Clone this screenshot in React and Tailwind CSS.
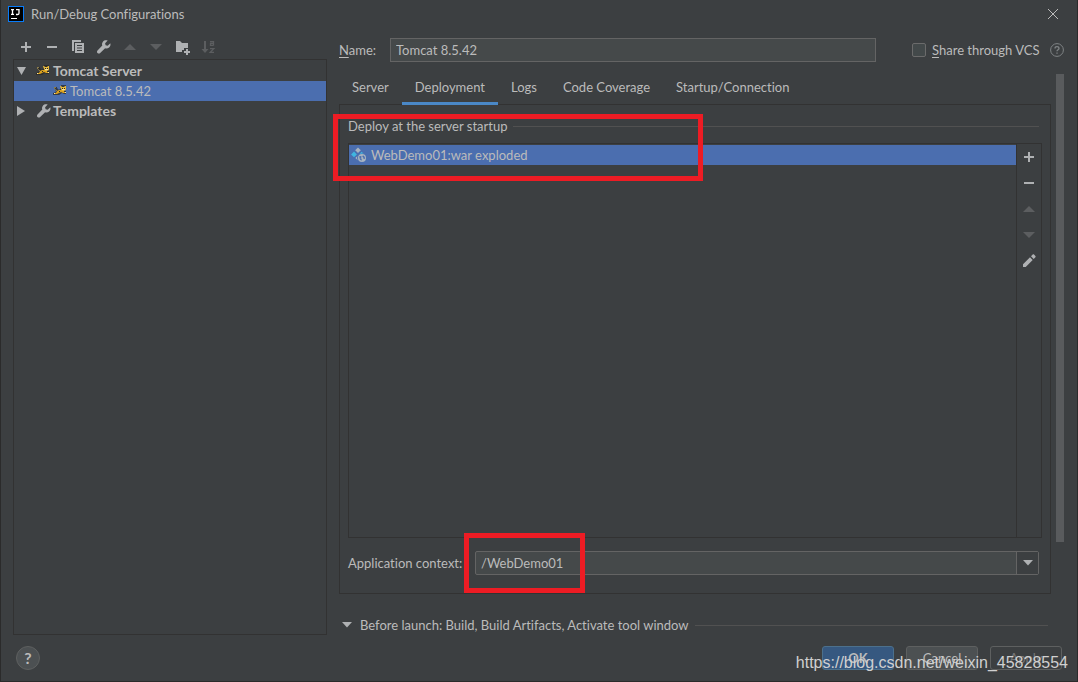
import React, { useState } from "react";

const tabs = ["Server", "Deployment", "Logs", "Code Coverage", "Startup/Connection"];

function Icon({ children, className = "" }) {
  return (
    <svg width="16" height="16" viewBox="0 0 16 16" fill="currentColor" aria-hidden="true" className={`shrink-0 ${className}`}>
      {children}
    </svg>
  );
}

const PlusIcon = () => (
  <Icon>
    <path d="M7 3h2v4h4v2H9v4H7V9H3V7h4z" />
  </Icon>
);

const MinusIcon = () => (
  <Icon>
    <path d="M3 7h10v2H3z" />
  </Icon>
);

const UpIcon = () => (
  <Icon>
    <path d="M2 11l6-6 6 6z" />
  </Icon>
);

const DownIcon = () => (
  <Icon>
    <path d="M2 5h12l-6 6z" />
  </Icon>
);

const CopyIcon = () => (
  <Icon>
    <path d="M2 1h9v2H4v9H2z" />
    <path fillRule="evenodd" d="M5 4h9v10H5zM7 6v1h5V6zm0 2.500v1h5v-1zM7 11v1h5v-1z" />
  </Icon>
);

const WrenchIcon = () => (
  <Icon>
    <path d="M14.3 4.2l-2.6 2.5-2.1-.5-.5-2 2.6-2.6C10 .9 8 1.300 6.900 2.700c-.9 1.100-1.100 2.600-.6 3.900L1.500 11.400c-.7.8-.7 1.900 0 2.600.8.8 1.900.8 2.700 0l4.900-4.800c1.300.5 2.900.2 4-.8 1.300-1.100 1.700-2.700 1.200-4.200z" />
  </Icon>
);

const FolderIcon = () => (
  <Icon>
    <path d="M2 2h4l2 2h6v5h-4v2H8v2H2z" />
    <path d="M12 10h2v2h2v2h-2v2h-2v-2h-2v-2h2z" />
  </Icon>
);

const SortIcon = () => (
  <Icon>
    <path d="M4 2h2v8h2.500L5 14l-3.500-4H4z" />
    <path fill="none" stroke="currentColor" strokeWidth="1.300" d="M10 2.600h3.500v3.800M13.500 4.300h-3v2.100h3M10 9.600h3.800L10.200 13.400H14" />
  </Icon>
);

const PencilIcon = () => (
  <Icon>
    <path d="M2 11.300L9 4.300 11.700 7 4.700 14H2zM10 3.300l1.700-1.700c.4-.4.900-.4 1.300 0L14.400 3c.4.4.4.9 0 1.300L12.700 6z" />
  </Icon>
);

const TomcatIcon = () => (
  <Icon>
    <path fill="#2a2a26" fillOpacity=".75" d="M1 4h3v1l2 2 2-2V2h5v4l-1 2h1v3h-2L9 10l-3 2H0v-2l3-1-1-3z" />
    <path fill="#8a7a4a" d="M1 4h2v1H2v1H1zM2 6h1v1h1v1H3z" />
    <path fill="#d9a01e" d="M4 8l2-1h3l2 1v1h2v1h-3L8 9 6 10 4 11H1v-1h2z" />
    <path fill="#e8b93c" d="M7 3h1l1 1h2l1-1h1v4l-2 1H9L8 6z" />
    <path fill="#f6e3a1" d="M9 6h3v1H9zM1 10h1v1H1zM12 9h1v1h-1z" />
    <path fill="#2a2a26" d="M9 5h1v1H9zM11 5h1v1h-1zM6 8h1v1H6z" />
  </Icon>
);

const ArtifactIcon = () => (
  <Icon>
    <path fill="#a9b4c0" d="M7 .5l2.800 2.800L7 6.100 4.200 3.300z" />
    <path fill="#40b6e0" d="M3 4.500l2.900 2.900L3 10.300.1 7.400zM10.500 4.700l2.400 2c-1.800-.3-3.300 0-4.500.9z" />
    <path fill="#a9b4c0" d="M6.500 9c-.6 1.300-.5 2.800.3 4.200L4.300 11z" />
    <circle cx="11" cy="11" r="4" fill="#a9b4c0" />
    <path fill="#4b6eaf" d="M8.200 9.200l2-.2.400 1.200-1.200 1 1.400.6-.3 2-1.600-1.300zM12 8.300l1.700 1.500.3 1.900-1.400.3-.3-1.400-1-.8z" />
  </Icon>
);

const toolbar = [
  { label: "Add", icon: <PlusIcon /> },
  { label: "Remove", icon: <MinusIcon /> },
  { label: "Copy", icon: <CopyIcon /> },
  { label: "Edit templates", icon: <WrenchIcon /> },
  { label: "Move up", icon: <UpIcon />, disabled: true },
  { label: "Move down", icon: <DownIcon />, disabled: true },
  { label: "New folder", icon: <FolderIcon /> },
  { label: "Sort", icon: <SortIcon />, disabled: true },
];

const artifactActions = [
  { label: "Add artifact", icon: <PlusIcon /> },
  { label: "Remove artifact", icon: <MinusIcon /> },
  { label: "Move artifact up", icon: <UpIcon />, disabled: true },
  { label: "Move artifact down", icon: <DownIcon />, disabled: true },
  { label: "Edit artifact", icon: <PencilIcon /> },
];

function IconButton({ label, disabled, className, children }) {
  return (
    <button
      aria-label={label}
      disabled={disabled}
      className={`flex items-center justify-center text-[#afb1b3] disabled:text-[#5c5e60] ${className}`}
    >
      {children}
    </button>
  );
}

function TitleBar() {
  return (
    <header className="flex h-7 items-center gap-[7px] pl-[7px] pr-[18px]">
      <svg width="16" height="16" viewBox="0 0 16 16" aria-hidden="true">
        <rect width="16" height="16" fill="#087cfa" />
        <rect x="1" y="1" width="14" height="14" fill="#000" />
        <path stroke="#fff" strokeWidth="1.300" fill="none" d="M3 3.600h3M4.500 3.600v4.800M3 8.400h3M8 3.600h3v3.600c0 1-.8 1.300-1.500 1.300H8" />
        <rect x="3" y="12" width="6" height="1" fill="#fff" />
      </svg>
      <h1 className="flex-1">Run/Debug Configurations</h1>
      <button aria-label="Close">
        <svg width="12" height="12" viewBox="0 0 12 12" stroke="#bbbbbb" aria-hidden="true">
          <path d="M1 1l10 10M11 1L1 11" />
        </svg>
      </button>
    </header>
  );
}

function Sidebar() {
  return (
    <aside className="flex w-[314px] shrink-0 flex-col pt-[7px]">
      <div className="flex h-6">
        {toolbar.map((item) => (
          <IconButton key={item.label} label={item.label} disabled={item.disabled} className="w-[26px]">
            {item.icon}
          </IconButton>
        ))}
      </div>
      <ul role="tree" aria-label="Configurations" className="flex-1 border border-[#323232] pt-px">
        <li role="treeitem" aria-expanded="true">
          <div className="flex h-5 items-center gap-px text-sm leading-5 font-bold">
            <svg width="10" height="10" viewBox="0 0 10 10" fill="#afb1b3" className="ml-[3px] mr-2" aria-hidden="true">
              <path d="M0 1h9L4.500 9z" />
            </svg>
            <TomcatIcon />
            Tomcat Server
          </div>
          <ul role="group">
            <li role="treeitem" aria-selected="true" className="flex h-5 items-center gap-px bg-[#4b6eaf] pl-[39px]">
              <TomcatIcon />
              Tomcat 8.5.42
            </li>
          </ul>
        </li>
        <li role="treeitem" aria-expanded="false" className="flex h-5 items-center gap-px text-sm leading-5 font-bold">
          <svg width="10" height="10" viewBox="0 0 10 10" fill="#afb1b3" className="ml-[3px] mr-2" aria-hidden="true">
            <path d="M0 0l8 5-8 5z" />
          </svg>
          <span className="text-[#afb1b3]">
            <WrenchIcon />
          </span>
          Templates
        </li>
      </ul>
    </aside>
  );
}

function DeploymentPanel({ context, setContext }) {
  return (
    <div role="tabpanel" aria-label="Deployment" className="-mt-px flex flex-1 flex-col border border-[#323232] px-2 pb-[18px] pt-[11px]">
      <section className="relative flex flex-1 flex-col">
        <div className="flex h-5 items-center gap-1.5 pr-[3px]">
          <h2>Deploy at the server startup</h2>
          <div className="h-px flex-1 bg-[#515151]" />
        </div>
        <div className="mt-[7px] flex flex-1 border border-[#323232]">
          <ul role="listbox" aria-label="Artifacts" className="flex-1 pt-px">
            <li role="option" aria-selected="true" className="flex h-5 items-center gap-1 bg-[#4b6eaf] pl-0.5">
              <ArtifactIcon />
              WebDemo01:war exploded
            </li>
          </ul>
          <div className="flex w-[25px] flex-col border-l border-[#323232]">
            {artifactActions.map((item) => (
              <IconButton key={item.label} label={item.label} disabled={item.disabled} className="h-[26px]">
                {item.icon}
              </IconButton>
            ))}
          </div>
        </div>
        {/* highlight around the deployed artifact */}
        <div className="pointer-events-none absolute -left-[15px] -top-0.5 h-[67px] w-[370px] border-5 border-[#ed1c24]" />
      </section>
      <div className="mt-[13px] flex h-6 items-center pr-[3px]">
        <label htmlFor="context" className="w-[127px]">
          Application context:
        </label>
        <div className="relative flex h-full flex-1 rounded-xs border border-[#646464] bg-[#45494a]">
          <input
            id="context"
            value={context}
            onChange={(e) => setContext(e.target.value)}
            className="min-w-0 flex-1 px-[5px] outline-none"
          />
          <button aria-label="Show contexts" className="flex w-[22px] items-center justify-center border-l border-[#646464] bg-[#3c3f41]">
            <svg width="10" height="6" viewBox="0 0 10 6" fill="#afb1b3" aria-hidden="true">
              <path d="M0 0h10L5 5.500z" />
            </svg>
          </button>
          {/* highlight around the context path */}
          <div className="pointer-events-none absolute -left-3 -top-[19px] h-[60px] w-[121px] border-5 border-[#ed1c24]" />
        </div>
      </div>
    </div>
  );
}

function Footer() {
  const button = "h-6 w-[72px] rounded-[3px] border";
  return (
    <footer className="relative flex items-center gap-3 py-[11px] pl-[15px] pr-[15px]">
      <button aria-label="Help" className="mr-auto size-6 rounded-full border border-[#5e6060] bg-[#4c5052] text-base leading-none font-bold">
        ?
      </button>
      <button className={`${button} border-[#4c708c] bg-[#365880] font-bold`}>OK</button>
      <button className={`${button} border-[#5e6060] bg-[#4c5052]`}>Cancel</button>
      <button disabled className={`${button} border-[#5e6060] text-[#777777]`}>
        Apply
      </button>
      <p className="pointer-events-none absolute bottom-2 right-[9px] font-['Liberation_Sans',sans-serif] text-base leading-5 text-[#d0d0d0]">
        https://blog.csdn.net/weixin_45828554
      </p>
    </footer>
  );
}

export default function App() {
  const [name, setName] = useState("Tomcat 8.5.42");
  const [shared, setShared] = useState(false);
  const [activeTab, setActiveTab] = useState("Deployment");
  const [context, setContext] = useState("/WebDemo01");

  return (
    <div className="flex min-h-screen flex-col border-x border-b border-[#2b2b2b] bg-[#3c3f41] font-['Lato',sans-serif] text-[13px] leading-5 text-[#bbbbbb] [font-variant-ligatures:none]">
      <TitleBar />
      <div className="flex flex-1 gap-3 pl-3 pr-[13px]">
        <Sidebar />
        <main className="flex min-w-0 flex-1 flex-col pt-[10px]">
          <div className="flex h-6 items-center">
            <label htmlFor="name" className="w-[51px]">
              <span className="underline underline-offset-2">N</span>ame:
            </label>
            <input
              id="name"
              value={name}
              onChange={(e) => setName(e.target.value)}
              className="h-6 min-w-0 flex-1 border border-[#646464] bg-[#45494a] px-[5px] outline-none"
            />
            <input
              id="share"
              type="checkbox"
              checked={shared}
              onChange={(e) => setShared(e.target.checked)}
              className="ml-9 size-3.5 appearance-none rounded-xs border border-[#6b6b6b] bg-[#43494a] checked:bg-[#4b6eaf]"
            />
            <label htmlFor="share" className="ml-1.5 w-[118px]">
              <span className="underline underline-offset-2">S</span>hare through VCS
            </label>
            <button aria-label="About sharing">
              <svg width="14" height="14" viewBox="0 0 14 14" fill="none" stroke="#7f8385" aria-hidden="true">
                <circle cx="7" cy="7" r="6.400" />
                <path strokeWidth="1.300" d="M5 5.500c0-2.400 4-2.400 4 0 0 1.300-2 1.400-2 2.800M7 9.500v1.300" />
              </svg>
            </button>
          </div>
          <div className="mt-2.5 flex flex-1 gap-[5px]">
            <div className="flex min-w-0 flex-1 flex-col">
              <div role="tablist" className="relative flex h-[33px]">
                {tabs.map((tab) => (
                  <button
                    key={tab}
                    role="tab"
                    aria-selected={tab === activeTab}
                    onClick={() => setActiveTab(tab)}
                    className={`border-b-3 px-[13px] ${tab === activeTab ? "border-[#4a88c7]" : "border-transparent"}`}
                  >
                    {tab}
                  </button>
                ))}
              </div>
              <DeploymentPanel context={context} setContext={setContext} />
              <div className="mt-[21px] flex h-5 items-center pl-[3px] pr-[3px]">
                <svg width="10" height="6" viewBox="0 0 10 6" fill="#afb1b3" className="mr-2" aria-hidden="true">
                  <path d="M0 0h10L5 5.500z" />
                </svg>
                <h2>Before launch: Build, Build Artifacts, Activate tool window</h2>
                <div className="ml-1.5 h-px flex-1 bg-[#515151]" />
              </div>
            </div>
            <div className="w-2 pt-0.5">
              <div className="h-5/6 bg-[#595b5d]" />
            </div>
          </div>
        </main>
      </div>
      <Footer />
    </div>
  );
}
